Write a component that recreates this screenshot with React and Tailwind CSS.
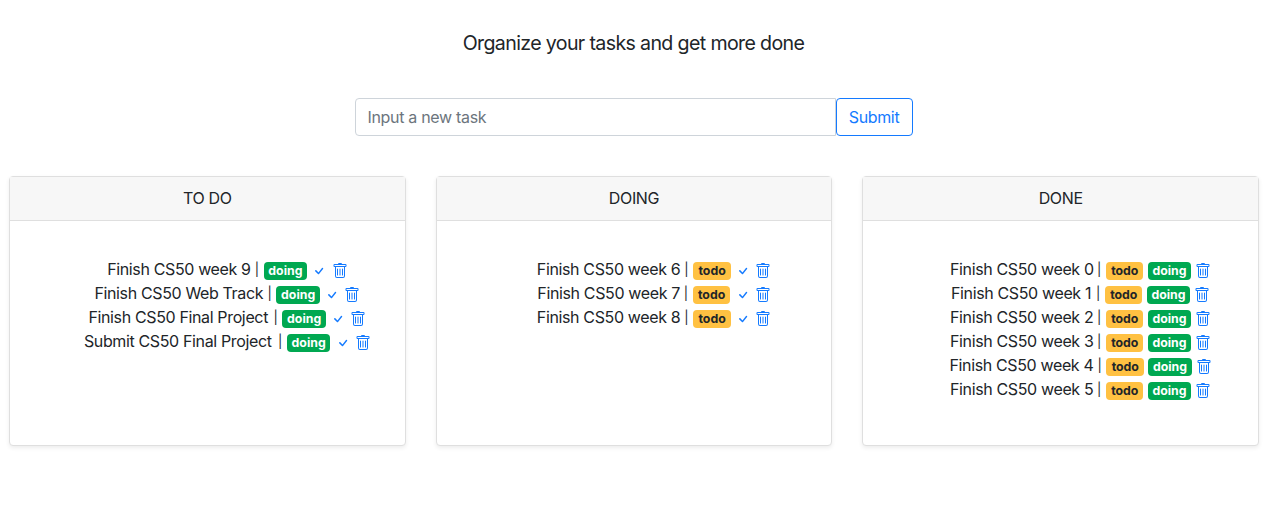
import { BsCheck, BsTrash } from "react-icons/bs";

const columns = [
  {
    title: "TO DO",
    tags: ["doing"],
    check: true,
    tasks: [
      { name: "Finish CS50 week 9", width: "w-[156.5px]" },
      { name: "Finish CS50 Web Track", width: "w-[182px]" },
      { name: "Finish CS50 Final Project", width: "w-[194px]" },
      { name: "Submit CS50 Final Project", width: "w-[203px]" },
    ],
  },
  {
    title: "DOING",
    tags: ["todo"],
    check: true,
    tasks: [
      { name: "Finish CS50 week 6", width: "w-[156.5px]" },
      { name: "Finish CS50 week 7", width: "w-[155.5px]" },
      { name: "Finish CS50 week 8", width: "w-[156.5px]" },
    ],
  },
  {
    title: "DONE",
    tags: ["todo", "doing"],
    check: false,
    tasks: [
      { name: "Finish CS50 week 0", width: "w-[156px]" },
      { name: "Finish CS50 week 1", width: "w-[154px]" },
      { name: "Finish CS50 week 2", width: "w-[156px]" },
      { name: "Finish CS50 week 3", width: "w-[156px]" },
      { name: "Finish CS50 week 4", width: "w-[157px]" },
      { name: "Finish CS50 week 5", width: "w-[156px]" },
    ],
  },
];

const tagStyles = {
  todo: "w-[37.5px] bg-[#ffc142] text-[#212529]",
  doing: "w-[43.5px] bg-[#00a851] text-white",
};

function Tag({ kind }) {
  return (
    <span
      className={`mt-1 flex h-[18px] items-center justify-center rounded text-[12.3px] leading-none font-bold ${tagStyles[kind]}`}
    >
      {kind}
    </span>
  );
}

function Column({ title, tags, check, tasks }) {
  return (
    <section className="flex h-[270px] flex-1 flex-col rounded border border-[#dfdfdf] bg-white shadow-[0_2px_4px_rgba(0,0,0,0.075)]">
      <h2 className="flex h-11 items-center justify-center border-b border-[#dfdfdf] bg-[#f7f7f7] pb-0.5 text-base tracking-[-0.35px]">
        {title}
      </h2>
      <ul className="flex flex-col items-center pt-9 pl-10">
        {tasks.map((task) => (
          <li key={task.name} className="flex h-6 items-center gap-[4.2px]">
            <span
              className={`-mr-[4.2px] flex h-6 justify-between pr-[5px] whitespace-nowrap tracking-[-0.36px] ${task.width}`}
            >
              {task.name} <span className="pt-[3px] text-[13px]">|</span>
            </span>
            {tags.map((tag) => (
              <Tag key={tag} kind={tag} />
            ))}
            {check && <BsCheck className="mt-[3px] size-4 text-[#147aff]" />}
            <BsTrash className="mt-[3px] size-4 text-[#147aff]" />
          </li>
        ))}
      </ul>
    </section>
  );
}

export default function App() {
  return (
    <main className="flex h-[505px] flex-col bg-white font-['Inter',sans-serif] text-base text-[#212529]">
      <p className="mt-7 text-center text-[19.6px] leading-[30px] tracking-[-0.64px]">
        Organize your tasks and get more done
      </p>
      <form className="mt-10 ml-[355px] flex h-[38px]">
        <input
          className="w-[481px] rounded-l border border-[#ced4da] px-[11.5px] tracking-[-0.32px] outline-none placeholder:text-[#6c757d]"
          placeholder="Input a new task"
        />
        <button
          type="button"
          className="w-[77px] rounded border border-[#147aff] pr-[1px] tracking-[-0.35px] text-[#147aff]"
        >
          Submit
        </button>
      </form>
      <div className="mt-10 mr-2 ml-[9px] flex gap-[30px]">
        {columns.map((column) => (
          <Column key={column.title} {...column} />
        ))}
      </div>
    </main>
  );
}
